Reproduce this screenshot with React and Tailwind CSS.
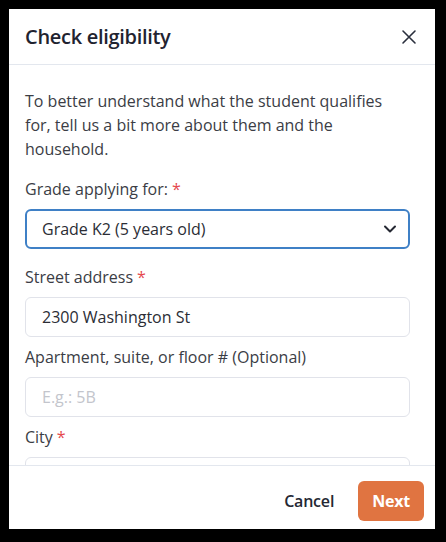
import { ChevronDown } from 'lucide-react';

const Label = ({ children, required }) => (
    <label className="block text-base leading-6 text-[#3b3d45]">
        {children}
        {required && <span className="ml-1 text-[#e5484d]">*</span>}
    </label>
);

const TextInput = ({ value, placeholder }) => (
    <div className="flex items-center h-10 px-4 border border-[#e1e3ea] rounded-md bg-white text-base">
        {value ? (
            <span className="text-[#2b2d35]">{value}</span>
        ) : (
            <span className="text-[#c3c5cc]">{placeholder}</span>
        )}
    </div>
);

export default function App() {
    return (
        <div className="w-full h-[542px] bg-black pl-[9px] pt-[9px] font-['Open_Sans',sans-serif]">
            <div className="w-[426px] h-[520px] bg-white flex flex-col">
                {/* Header */}
                <div className="flex items-center justify-between h-[56px] pl-4 pr-[14px] border-b border-[#e3e7ee] shrink-0">
                    <h2 className="text-[20px] font-semibold text-[#1f2330] tracking-[-0.3px]">Check eligibility</h2>
                    <button className="w-6 h-6 flex items-center justify-center text-[#2a2f3d]">
                        <svg width="24" height="24" viewBox="0 0 24 24" fill="none" stroke="currentColor" strokeWidth="1.6" strokeLinecap="round">
                            <path d="M6 6l12 12M18 6L6 18" />
                        </svg>
                    </button>
                </div>

                {/* Body */}
                <div className="h-[400px] overflow-hidden pt-6 pl-4 pr-[25px] shrink-0">
                    <p className="text-base leading-6 text-[#3b3d45]">
                        To better understand what the student qualifies for, tell us a bit more about them and the household.
                    </p>

                    <div className="mt-4">
                        <Label required>Grade applying for:</Label>
                        <div className="mt-2 flex items-center justify-between h-10 pl-[15px] pr-2 border-2 border-[#3f80c6] rounded-md">
                            <span className="text-base text-[#2b2d35]">Grade K2 (5 years old)</span>
                            <ChevronDown size={20} strokeWidth={2.4} className="text-[#252833]" />
                        </div>
                    </div>

                    <div className="mt-4">
                        <Label required>Street address</Label>
                        <div className="mt-2">
                            <TextInput value="2300 Washington St" />
                        </div>
                    </div>

                    <div className="mt-2">
                        <Label>Apartment, suite, or floor # (Optional)</Label>
                        <div className="mt-2">
                            <TextInput placeholder="E.g.: 5B" />
                        </div>
                    </div>

                    <div className="mt-2">
                        <Label required>City</Label>
                        <div className="mt-2">
                            <TextInput placeholder="" />
                        </div>
                    </div>
                </div>

                {/* Footer */}
                <div className="flex items-start justify-end gap-2 border-t border-[#e3e7ee] pt-[15px] pb-2 pr-[11px] shrink-0">
                    <button className="h-10 px-4 text-base font-semibold text-[#252833] tracking-[-0.2px]">Cancel</button>
                    <button className="h-10 px-[14px] rounded-md bg-[#e07441] text-base font-bold text-white tracking-[-0.2px]">Next</button>
                </div>
            </div>
        </div>
    );
}
